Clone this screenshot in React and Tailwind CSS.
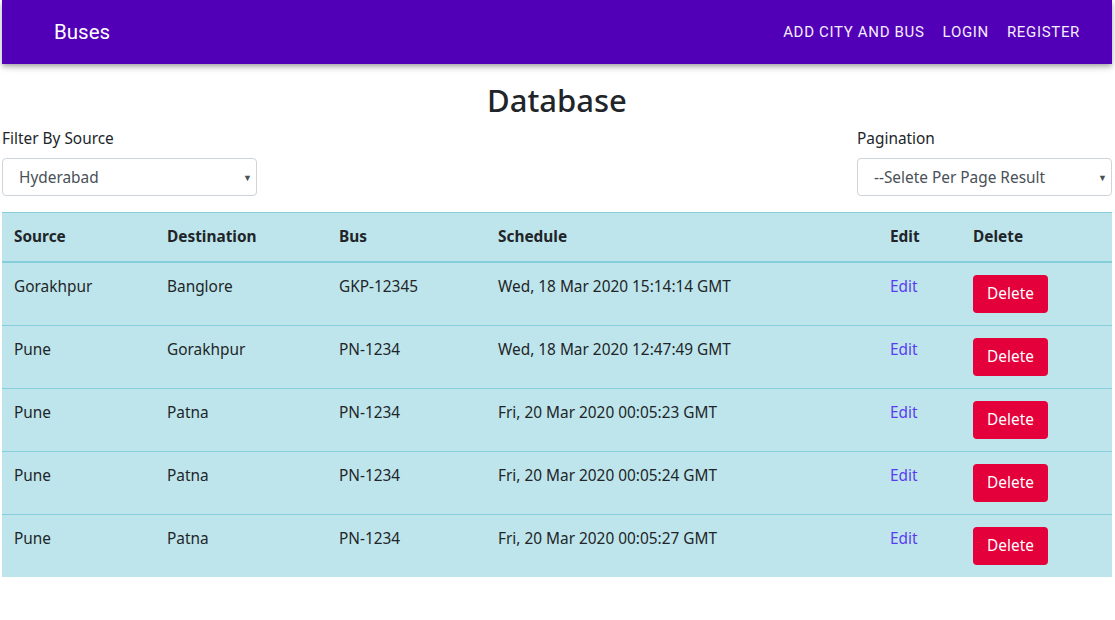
import React from "react";

const rows = [
  ["Gorakhpur", "Banglore", "GKP-12345", "Wed, 18 Mar 2020 15:14:14 GMT"],
  ["Pune", "Gorakhpur", "PN-1234", "Wed, 18 Mar 2020 12:47:49 GMT"],
  ["Pune", "Patna", "PN-1234", "Fri, 20 Mar 2020 00:05:23 GMT"],
  ["Pune", "Patna", "PN-1234", "Fri, 20 Mar 2020 00:05:24 GMT"],
  ["Pune", "Patna", "PN-1234", "Fri, 20 Mar 2020 00:05:27 GMT"],
];

function Select({ text }) {
  return (
    <div className="relative h-[38px] w-[255px] rounded-[4px] border border-[#ced4da] bg-white flex items-center pl-[16px] text-[15.4px] text-[#495057]">
      {text}
      <span className="absolute right-[4px] top-[12px] text-[9px] text-[#495057]">▼</span>
    </div>
  );
}

export default function App() {
  const base = { fontFamily: '"Noto Sans", sans-serif' };
  return (
    <div className="min-h-[620px] bg-white text-[#212529]" style={base}>
      <div className="ml-[2px] w-[1110px] h-[64px] bg-[#5200b7] shadow-[0_2px_4px_-1px_rgba(0,0,0,0.2),0_4px_5px_0_rgba(0,0,0,0.14),0_1px_10px_0_rgba(0,0,0,0.12)] flex items-center pl-[52px] pr-[32px] text-white" style={{ fontFamily: 'Roboto, sans-serif' }}>
        <div className="text-[20.5px] flex-1">Buses</div>
        <div className="flex gap-[18px] text-[15px] uppercase tracking-[0.045em] text-[#f4ecff]">
          <span>Add City and Bus</span>
          <span>Login</span>
          <span>Register</span>
        </div>
      </div>
      <div className="ml-[2px] w-[1110px]">
        <h2 className="mt-[18px] text-center text-[31px] font-medium leading-[1.2] mb-[8px]">Database</h2>
        <div className="flex justify-between">
          <div>
            <div className="text-[15.4px] leading-[24px] mb-[7px]">Filter By Source</div>
            <Select text="Hyderabad" />
          </div>
          <div>
            <div className="text-[15.4px] leading-[24px] mb-[7px]">Pagination</div>
            <Select text="--Selete Per Page Result" />
          </div>
        </div>
        <table className="mt-[16px] w-full border-collapse bg-[#bee5eb] text-[15.4px] leading-[24px]">
          <thead>
            <tr className="border-t border-[#86cfda]">
              <th className="w-[153px] p-[12px] text-left font-bold border-b-2 border-[#86cfda]">Source</th>
              <th className="w-[172px] p-[12px] text-left font-bold border-b-2 border-[#86cfda]">Destination</th>
              <th className="w-[159px] p-[12px] text-left font-bold border-b-2 border-[#86cfda]">Bus</th>
              <th className="w-[392px] p-[12px] text-left font-bold border-b-2 border-[#86cfda]">Schedule</th>
              <th className="w-[83px] p-[12px] text-left font-bold border-b-2 border-[#86cfda]">Edit</th>
              <th className="p-[12px] text-left font-bold border-b-2 border-[#86cfda]">Delete</th>
            </tr>
          </thead>
          <tbody>
            {rows.map((r, i) => (
              <tr key={i} className="border-t border-[#86cfda] align-top">
                <td className="p-[12px]">{r[0]}</td>
                <td className="p-[12px]">{r[1]}</td>
                <td className="p-[12px]">{r[2]}</td>
                <td className="p-[12px]">{r[3]}</td>
                <td className="p-[12px]"><span className="text-[#5a3cf0]">Edit</span></td>
                <td className="p-[12px]">
                  <button className="h-[38px] w-[75px] rounded-[4px] bg-[#e4003a] text-white text-[15.4px]">Delete</button>
                </td>
              </tr>
            ))}
          </tbody>
        </table>
      </div>
    </div>
  );
}
